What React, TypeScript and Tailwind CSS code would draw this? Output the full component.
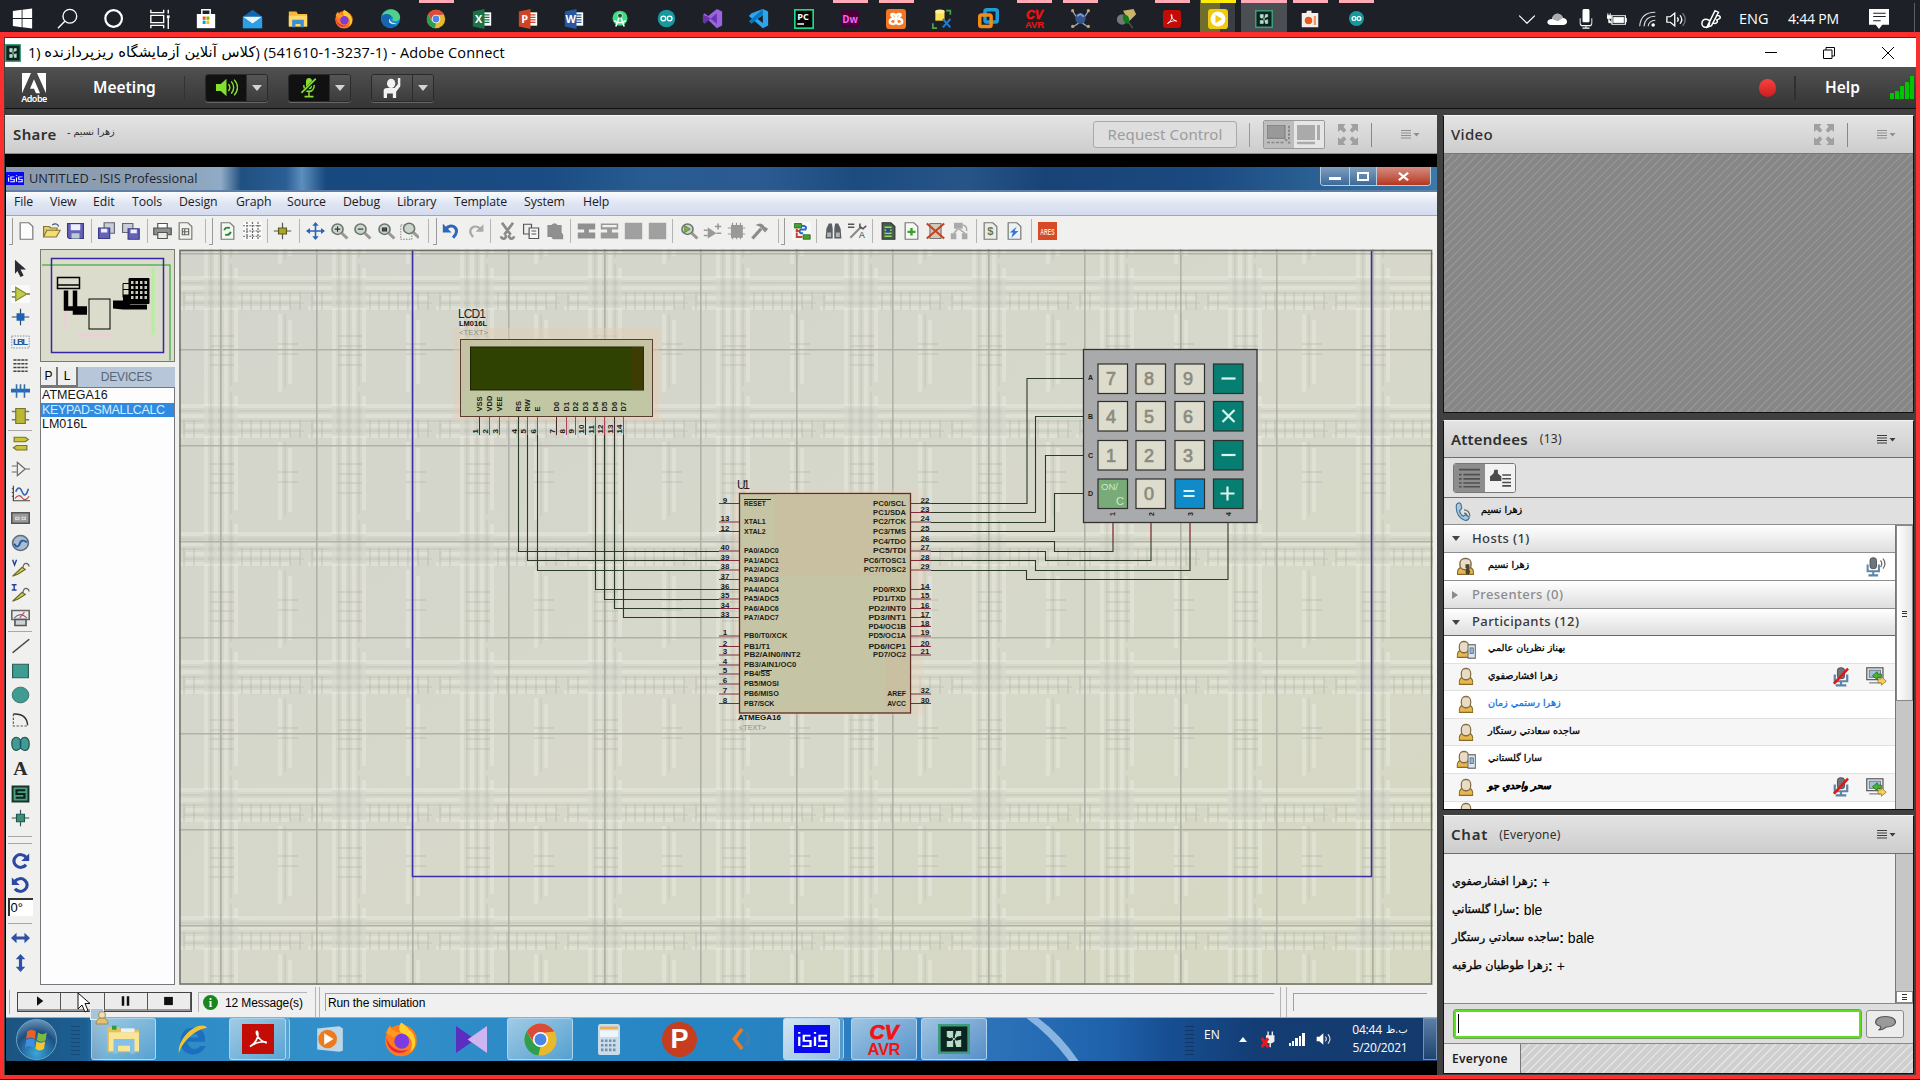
import React from "react";

type Kids = { children?: React.ReactNode };

const Svg = ({ s = 24, w, h, vb = "0 0 24 24", children }: { s?: number; w?: number; h?: number; vb?: string } & Kids) => (
  <svg width={w ?? s} height={h ?? s} viewBox={vb} preserveAspectRatio="none" className="block shrink-0" fill="none">
    {children}
  </svg>
);

/* ---------- shared logos ---------- */

const Firefox = ({ s }: { s: number }) => (
  <Svg s={s}>
    <circle cx="12" cy="13" r="10.5" fill="#ff7b1c" />
    <path d="M12 1c4 2 5 5 7 6 4 6 3 11-1 14 4-9-2-12-6-13-2-3-1-5 0-7z" fill="#ffcf2e" />
    <path d="M2 8c1-3 2-4 3-5 0 2 1 3 3 4l4 1-5 3z" fill="#ff9a1f" />
    <circle cx="12.5" cy="13.5" r="5" fill="#7a3be0" />
    <path d="M2 11c3 8 9 10 15 8-6 5-14 2-15-8z" fill="#e5284f" />
  </Svg>
);

const Chrome = ({ s }: { s: number }) => (
  <Svg s={s}>
    <circle cx="12" cy="12" r="11" fill="#e9b92c" />
    <path d="M2.5 6.5a11 11 0 0 1 19 0L12 7.5 7.5 14z" fill="#dc4a38" />
    <path d="M2.5 6.5 7.2 14.5 12 17l-1.5 6A11 11 0 0 1 2.5 6.5z" fill="#2f9e4f" />
    <circle cx="12" cy="12" r="5.2" fill="#fff" />
    <circle cx="12" cy="12" r="4.1" fill="#4a85e8" />
  </Svg>
);

const Acrobat = ({ w, h, r = 3 }: { w: number; h: number; r?: number }) => (
  <Svg w={w} h={h}>
    <rect width="24" height="24" rx={r} fill="#c40c06" />
    <path d="M6 18c4-2 7-8 5.500-12-1.500-1-1 6 6.500 9 1-1.500-7-1-12 3z" stroke="#fff" strokeWidth="1.300" />
  </Svg>
);

const Connect = ({ w, h }: { w: number; h: number }) => (
  <Svg w={w} h={h}>
    <rect x="1" y="1" width="22" height="22" fill="#0c241f" stroke="#3d9c7c" strokeWidth="2" />
    <path d="M7 6h4v4l-2 1-2-1zM17 6h-3l-1 4 4-1zM7 14h4v4H7zM13 14l4-1v5h-3zM10 10l4 4M14 10l-4 4" fill="#b9dccb" stroke="#b9dccb" strokeWidth=".8" />
  </Svg>
);

const CvAvr = ({ s }: { s: number }) => (
  <Svg s={s}>
    <text x="12" y="12" textAnchor="middle" fontSize="14" fontWeight="bold" fontStyle="italic" fontFamily="Liberation Sans" fill="#f01414" stroke="#f01414" strokeWidth=".5">CV</text>
    <text x="12" y="22.500" textAnchor="middle" fontSize="11" fontWeight="bold" fontFamily="Liberation Sans" textLength="22" fill="#f01414">AVR</text>
  </Svg>
);

const Isis = ({ w, h }: { w: number; h: number }) => (
  <Svg w={w} h={h}>
    <rect width="24" height="24" fill="#0808ee" />
    <path d="M3.5 10v8M3.5 6v1.5M11 9H6.500v4.500H11V18H5.500M14 10v8M14 6v1.500M22 9h-5v4.500h4.500V18H16" stroke="#fff" strokeWidth="1.5" />
  </Svg>
);

const Arduino = () => (
  <Svg s={19}>
    <circle cx="12" cy="12" r="11" fill="#169a9f" />
    <circle cx="8" cy="12" r="3" stroke="#fff" strokeWidth="1.600" />
    <circle cx="16" cy="12" r="3" stroke="#fff" strokeWidth="1.600" />
  </Svg>
);

const Office = ({ c, l }: { c: string; l: string }) => (
  <Svg s={20}>
    <rect x="11" y="4" width="12" height="16" fill="#fff" />
    <path d="M14 7h7M14 10h7M14 13h7M14 16h7" stroke={c} strokeWidth="1.500" />
    <path d="M1 3 15 0v24L1 21z" fill={c} />
    <text x="8" y="17" textAnchor="middle" fontSize="13" fontWeight="bold" fontFamily="Open Sans" fill="#fff">{l}</text>
  </Svg>
);

/* ---------- host taskbar ---------- */

type Task = { icon: React.ReactNode; bar?: "pink" | "yellow" | "wide" };

const tasks: Task[] = [
  { icon: <Svg s={21}><path d="M1 3.500 11 2v9.500H1zM12 2l11-1.500v11H12zM1 12.500h10V22L1 20.500zM12 12.500h11v11L12 22z" fill="#fff" /></Svg> },
  { icon: <Svg s={22}><circle cx="14" cy="9" r="7.500" stroke="#fff" strokeWidth="1.500" /><path d="M8.500 14.500 1 22" stroke="#fff" strokeWidth="1.500" /></Svg> },
  { icon: <Svg s={21}><circle cx="11" cy="12" r="9.500" stroke="#fff" strokeWidth="2.500" /></Svg> },
  { icon: <Svg s={22}><path d="M2 2v3h14V2M2 8h14v8H2zM2 22v-3h14v3M21 2v4M21 10v13" stroke="#fff" strokeWidth="1.500" /><rect x="19.500" y="8" width="3" height="3" fill="#fff" /></Svg> },
  { icon: <Svg s={20}><path d="M7 6V1h10v5" stroke="#fff" strokeWidth="1.800" /><path d="M1 6h22v17H1z" fill="#fff" /><path d="M8 9h3.500v4H8z" fill="#f25022" /><path d="M12.500 9H16v4h-3.500z" fill="#7fba00" /><path d="M8 14h3.500v4H8z" fill="#00a4ef" /><path d="M12.500 14H16v4h-3.500z" fill="#ffb900" /></Svg> },
  { icon: <Svg s={21}><path d="M1 10 12 2l11 8v13H1z" fill="#1067b5" /><path d="M1 10h22L12 18z" fill="#e9f5fc" /><path d="m1 10 11 8 11-8v13H1z" fill="#2ba0e8" /></Svg> },
  { icon: <Svg s={20}><path d="M1 3h9l2 3h11v15H1z" fill="#f5b93a" /><path d="M1 8h22v13H1z" fill="#ffd869" /><path d="M5 13h14v9h-4v-4H9v4H5z" fill="#3c8fd6" /></Svg> },
  { icon: <Firefox s={20} /> },
  { icon: <Svg s={21}><circle cx="12" cy="12" r="11" fill="#1b88d2" /><path d="M2 9C6-1 21-1 23 10c0 6-7 6-9 4 3-4-3-9-12-5z" fill="#4fd08b" /><path d="M2 9c5-4 11-2 11 2-4 2-3 9 5 9-8 6-19 0-16-11z" fill="#1565b4" /><path d="M11 12c0 5 5 6 9 5-6 3-12 0-9-5z" fill="#e9f6ff" /></Svg> },
  { icon: <Chrome s={20} />, bar: "pink" },
  { icon: <Office c="#1c7245" l="X" /> },
  { icon: <Office c="#cf4424" l="P" /> },
  { icon: <Office c="#29579f" l="W" /> },
  { icon: <Svg s={20}><circle cx="12" cy="11" r="9" fill="#3ddc84" /><path d="M5 14q7 5 14 0M12 7 7 21M12 7l5 14" stroke="#f4fff8" strokeWidth="2" /><circle cx="12" cy="8" r="3" fill="#175b3a" stroke="#e4fff0" /></Svg> },
  { icon: <Arduino /> },
  { icon: <Svg s={21}><path d="M17 1 23 4v16l-6 3L1 8l2-2 4 3zM17 1v22" fill="#9a63e0" /><path d="M1 8v8l2 2L17 6v12L7 10z" fill="#6a35ac" /></Svg> },
  { icon: <Svg s={21}><path d="m17 1 6 3v16l-6 3L1 9l3-3z" fill="#2da5ee" /><path d="M17 1 1 15l3 3L17 7z" fill="#0a77c6" /><path d="M17 8v9l-6-4.500z" fill="#1d2127" /></Svg> },
  { icon: <Svg s={20}><rect x="1" y="1" width="22" height="22" fill="#050505" stroke="#21d789" strokeWidth="2" /><text x="4" y="13" fontSize="11" fontWeight="bold" fontFamily="Open Sans" fill="#fff">PC</text><path d="M4 18h8" stroke="#fff" strokeWidth="1.800" /></Svg> },
  { icon: <Svg s={18}><rect width="24" height="24" rx="4" fill="#470137" /><text x="12" y="17" textAnchor="middle" fontSize="13" fontWeight="bold" fontFamily="Open Sans" fill="#ff61f6">Dw</text></Svg>, bar: "pink" },
  { icon: <Svg s={20}><rect width="24" height="24" rx="4" fill="#f37623" /><path d="M8 6c5 0 3 3 4 6-1 3 1 6-4 6s-4-6 0-6-5-6 0-6zM16 6c-5 0-3 3-4 6 1 3-1 6 4 6s4-6 0-6 5-6 0-6z" stroke="#fff" strokeWidth="3" /></Svg>, bar: "pink" },
  { icon: <Svg s={20}><path d="M4 2h11v12H4z" fill="#ffe24f" /><ellipse cx="9.500" cy="3" rx="5.500" ry="2.500" fill="#fff0a0" /><path d="M17 2h5v5M1 17v6h5" stroke="#4aa64a" strokeWidth="2" /><path d="m13 12 9 10M22 12l-9 10" stroke="#1e7bd0" strokeWidth="2.500" /></Svg> },
  { icon: <Svg s={21}><rect x="8" y="2" width="14" height="14" rx="2" stroke="#1f9cd8" strokeWidth="4" /><rect x="2" y="8" width="13" height="13" rx="2" stroke="#f08c17" strokeWidth="4" /></Svg> },
  { icon: <CvAvr s={21} />, bar: "pink" },
  { icon: <Svg s={21}><path d="M3 2c1 6 11 16 18 20M21 2C20 8 10 18 3 22" stroke="#8fa6c9" strokeWidth="1.600" /><circle cx="12" cy="12" r="6" fill="#39548c" /><path d="m8 9 4-2 4 3" stroke="#7d9bd0" strokeWidth="2" /><circle cx="3" cy="3" r="1.800" fill="#d0a25a" /><circle cx="21" cy="3" r="1.800" fill="#d0a25a" /><circle cx="3" cy="21" r="1.800" fill="#d0a25a" /><circle cx="21" cy="21" r="1.800" fill="#d0a25a" /></Svg>, bar: "pink" },
  { icon: <Svg s={21}><path d="M8 3 20 1l3 6-8 8z" fill="#cbb46a" /><circle cx="7" cy="13" r="6" fill="#777" /><path d="M8 7c6 0 8 4 7 11-5 0-8-3-7-11z" fill="#117a1b" /><path d="m15 17 4 6" stroke="#555" strokeWidth="1.500" /></Svg> },
  { icon: <Acrobat w={18} h={18} r={4} />, bar: "pink" },
  { icon: <Svg s={20}><rect width="24" height="24" rx="4" fill="#efcb0b" /><circle cx="12" cy="12" r="9" fill="#fff" /><path d="m9 7 8 5-8 5z" fill="#efcb0b" /></Svg>, bar: "yellow" },
  { icon: <Connect w={18} h={18} />, bar: "wide" },
  { icon: <Svg s={18}><path d="M1 4h6l1-3h6v3h9v19H1z" fill="#f3efec" /><circle cx="10" cy="14" r="5" fill="#e8591c" /><path d="M17 8h3v12h-3z" fill="#f09a62" /></Svg>, bar: "pink" },
  { icon: <Svg s={15}><circle cx="12" cy="12" r="12" fill="#169a9f" /><circle cx="8" cy="12" r="3" stroke="#fff" strokeWidth="2" /><circle cx="16" cy="12" r="3" stroke="#fff" strokeWidth="2" /></Svg>, bar: "pink" },
];

const HostTaskbar = () => (
  <div className="flex h-8 items-stretch overflow-hidden bg-[#1d2127]">
    <div className="-ml-px flex">
      {tasks.map((t, i) => (
        <div
          key={i}
          className={
            "flex w-[46px] flex-col items-center " +
            (t.bar === "wide" ? "bg-[#4b4e52]" : t.bar === "yellow" ? "bg-[linear-gradient(90deg,transparent_5px,#716d2e_5px,#716d2e_25px,#3b3f43_25px,#3b3f43_40px,transparent_40px)]" : "")
          }
        >
          <div
            className={
              "h-[3px] shrink-0 " +
              (t.bar === "pink" ? "w-[35px] bg-[#ffaab4]" : t.bar === "yellow" ? "w-[35px] bg-[#ffee00]" : t.bar === "wide" ? "w-[46px] bg-[#ffaab4]" : "w-0")
            }
          />
          <div className="flex h-[33px] shrink-0 items-center pb-[2px]">{t.icon}</div>
        </div>
      ))}
    </div>
    <div className="ml-auto flex items-center pt-[6px] font-['Open_Sans'] text-[15px] text-white">
      <Svg w={16} h={9}><path d="m0 1 12 21L24 1" stroke="#fff" strokeWidth="2.200" /></Svg>
      <div className="w-3" />
      <Svg w={20} h={13}><path d="M4 22c-6-2-4-11 2-11C8-3 18 0 19 9c6 0 7 12 1 13z" fill="#fff" /><path d="M6 11C8-3 18 0 19 9l-6 6z" fill="#a9abad" /></Svg>
      <div className="w-3" />
      <Svg w={14} h={20}><rect x="6" y="0" width="12" height="16" rx="2" fill="#fff" /><path d="M2 11v6q0 3 4 3h12q4 0 4-3v-6M12 20v3M6 23h12" stroke="#fff" strokeWidth="1.500" /></Svg>
      <div className="w-3.5" />
      <Svg w={20} h={13}><path d="M6 5h16v16H6zM23 9v8" stroke="#fff" strokeWidth="1.500" /><path d="M8 8h12v10H8zM0 4h5v6H0zM2 10v8h4M1 0v4M4 0v4" fill="#fff" stroke="#fff" /></Svg>
      <div className="w-3" />
      <Svg w={17} h={16}><path d="M1 23C2 9 10 2 23 2M7 23C8 13 13 8 23 8M13 23c0-5 4-9 10-9" stroke="#ddd" strokeWidth="1.500" /><circle cx="20" cy="21" r="2.500" fill="#fff" /></Svg>
      <div className="w-2.5" />
      <Svg w={21} h={17}><path d="M1 8h4l5-5v18l-5-5H1z" stroke="#fff" strokeWidth="1.500" /><path d="M13 9q2 3 0 6M16 6q4 6 0 12" stroke="#fff" strokeWidth="1.500" /><path d="M19 3q6 9 0 18" stroke="#777" strokeWidth="1.500" /></Svg>
      <div className="w-3.5" />
      <Svg w={21} h={20}><path d="M8 19 16 2l4 2-8 16-5 2zM10 14c-7-4-9 0-9 4 1 6 8 5 9-2M17 8c6-1 7 3 1 5 2 3-1 5-4 4" stroke="#fff" strokeWidth="1.700" /></Svg>
      <span className="ml-[17px] w-[31px] text-[14.500px] leading-5">ENG</span>
      <span className="ml-[18px] w-[55px] whitespace-nowrap text-[14px] leading-5 tracking-[-0.200px]">4:44 PM</span>
      <div className="w-[26px]" />
      <Svg w={20} h={20}><path d="M0 0h24v19h-8l-4 5-4-5H0z" fill="#fff" /><path d="M5 5h15M5 9h15M5 14h9" stroke="#1d2127" strokeWidth="1.300" /></Svg>
      <div className="mr-[5px] ml-[25px] h-8 w-px bg-[#5a5d61]" />
    </div>
  </div>
);

/* ---------- window chrome ---------- */

const TitleBar = () => (
  <div className="flex h-[29px] shrink-0 items-center bg-white text-black">
    <Connect w={16} h={18} />
    <div className="ml-[7px] flex items-center whitespace-pre font-['Open_Sans'] text-[14.500px]" dir="ltr">
      <span>1) </span>
      <span dir="rtl" className="font-['DejaVu_Sans'] text-[14.800px]">کلاس آنلاین آزمایشگاه ریزپردازنده</span>
      <span className="tracking-[0.100px]">) (541610-1-3237-1) - Adobe Connect</span>
    </div>
    <div className="ml-auto flex items-center pr-[22px]">
      <div className="h-px w-3 bg-black" />
      <div className="w-[46px]" />
      <Svg s={12}><path d="M1 6h17v17H1zM6 6V1h17v17h-5" stroke="#000" strokeWidth="2" /></Svg>
      <div className="w-[47px]" />
      <Svg s={12}><path d="m0 0 24 24M24 0 0 24" stroke="#000" strokeWidth="2" /></Svg>
    </div>
  </div>
);

const Split = ({ dark, children }: { dark?: boolean } & Kids) => (
  <div className="flex h-[28px] w-[63px] overflow-hidden rounded-[3px] border border-[#2a2a2a] shadow-[0_1px_0_#666]">
    <div className={"flex w-[41px] items-center justify-center border-r border-[#2c2c2c] " + (dark ? "bg-[#111]" : "bg-gradient-to-b from-[#565656] to-[#3c3c3c]")}>{children}</div>
    <div className="flex flex-1 items-center justify-center bg-gradient-to-b from-[#565656] to-[#3c3c3c]">
      <div className="border-x-[5px] border-t-[6px] border-x-transparent border-t-[#d4d4d4]" />
    </div>
  </div>
);

const ConnectBar = () => (
  <div className="flex h-[42px] shrink-0 items-center border-b border-[#111] bg-gradient-to-b from-[#515151] to-[#353535] font-['Noto_Sans'] text-white">
    <div className="ml-[17px] flex w-6 flex-col items-center pt-px">
      <Svg w={24} h={21}><path d="M0 0h9L0 23zM15 0h9v23zM12 7l6 16h-4l-2-5H8z" fill="#fff" /></Svg>
      <span className="-mt-px text-[9px] leading-[11px] font-semibold tracking-[-0.500px]">Adobe</span>
    </div>
    <span className="ml-[47px] w-[63px] pt-px text-[15.500px] font-semibold">Meeting</span>
    <div className="mr-[20px] ml-[28px] h-6 w-px bg-[#333]" />
    <Split dark>
      <Svg w={23} h={21}><path d="M1 8h5l6-6v20l-6-6H1z" fill="#84e02f" /><path d="M14 8q3 4 0 8M17 5q5 7 0 14M20 3q7 9 0 18" stroke="#84e02f" strokeWidth="1.500" /></Svg>
    </Split>
    <div className="w-5" />
    <Split dark>
      <Svg w={18} h={21}><rect x="8" y="1" width="8" height="13" rx="4" fill="#84e02f" /><path d="M5 9c0 10 14 10 14 0M12 17v5M6 22.500h12" stroke="#84e02f" strokeWidth="2" /><path d="M3 18 22 2" stroke="#111" strokeWidth="4" /><path d="M2 18 21 2" stroke="#84e02f" strokeWidth="2" /></Svg>
    </Split>
    <div className="w-[20px]" />
    <Split>
      <Svg w={20} h={22}><circle cx="11" cy="7" r="5" fill="#f2f2f2" /><path d="M2 23V15q0-3 4-3h9l4-4V1h3v9l-5 6v7h-4v-5H6v5z" fill="#f2f2f2" /></Svg>
    </Split>
    <div className="ml-auto flex items-center">
      <div className="h-[18px] w-[17px] rounded-full bg-gradient-to-b from-[#fb4040] to-[#c81e1e]" />
      <div className="ml-[18px] h-6 w-[2px] bg-[#303030]" />
      <span className="ml-[29px] w-[37px] pt-px text-[15.500px] font-semibold">Help</span>
      <div className="ml-[28px] flex h-[23px] items-end gap-px pr-[2px]">
        <div className="h-[6px] w-1 bg-[#00c400]" />
        <div className="h-2 w-1 bg-[#00c400]" />
        <div className="h-[13px] w-1 bg-[#00c400]" />
        <div className="h-[17px] w-1 bg-[#00c400]" />
        <div className="h-[23px] w-1 bg-[#00c400]" />
      </div>
    </div>
  </div>
);

const Expand = () => (
  <Svg w={20} h={21}><path d="M0 0h9L6.500 3 10 7 7 10 3 6.500 0 9zM24 0h-9l2.500 3L14 7l3 3 4-3.500L24 9zM0 24h9l-2.500-3 3.500-4-3-3-4 3.500L0 15zM24 24h-9l2.500-3-3.500-4 3-3 4 3.500 3-2.500z" fill="#a0a0a0" /></Svg>
);

const PodMenu = ({ faint }: { faint?: boolean }) => (
  <Svg w={19} h={9} vb="0 0 19 9"><path d="M0 .5h10M0 3h10M0 5.500h10M0 8h10" stroke={faint ? "#8e8e8e" : "#3c3c3c"} /><path d="M12.500 3h6l-3 3.500z" fill={faint ? "#8e8e8e" : "#3c3c3c"} /></Svg>
);

const podHead = "flex shrink-0 items-center bg-gradient-to-b from-[#e3e3e3] to-[#cdcdcd] font-['Noto_Sans'] text-[#2f2f2f]";

/* ---------- schematic editor ---------- */

const V = ({ d, c = "#777", f = "none", w = 1.500 }: { d: string; c?: string; f?: string; w?: number }) => <path d={d} stroke={c} fill={f} strokeWidth={w} />;
const page = "M4 1h11l5 5v17H4z";
const lens = (
  <g><V d="m15 15 7 7" c="#9a9a90" w={4} /><circle cx="9.500" cy="9.500" r="7" fill="#c9d6c9" stroke="#6b7471" strokeWidth="2" /></g>
);

const toolbar: { c: number; g: React.ReactNode | "sep" | "bracket" }[] = [
  { c: 11, g: "bracket" },
  { c: 26, g: <V d={page} f="#fdfdfd" c="#777" /> },
  { c: 51, g: <g><V d="M2 20V6h7l2 2h8v4" f="#e0cf7a" c="#877730" /><V d="m2 20 4-9h17l-5 9z" f="#f2df74" c="#877730" /><V d="M13 4c4-3 7-1 8 2" c="#456" /></g> },
  { c: 75, g: <g><V d="M2 2h20v20H4l-2-2z" f="#6463b8" c="#3b3a86" /><path d="M6 3h12v8H6z" fill="#eef" /><path d="M7 15h10v7H7z" fill="#bcc" /></g> },
  { c: 91, g: "sep" },
  { c: 106.5, g: <g><V d="M9 1h13v14H9z" f="#c9cdd6" c="#667" /><V d="M2 8h14v14H2z" f="#6463b8" c="#3b3a86" /><path d="M5 9h8v5H5z" fill="#eef" /></g> },
  { c: 130, g: <g><V d="M2 2h13v12H2z" f="#c9cdd6" c="#667" /><V d="M9 9h14v14H9z" f="#6463b8" c="#3b3a86" /><path d="M12 10h8v5h-8z" fill="#eef" /></g> },
  { c: 147, g: "sep" },
  { c: 162.5, g: <g><V d="M6 8V2h12v6" f="#fff" c="#555" /><V d="M1 8h22v9H1z" f="#8b9290" c="#4b504f" /><V d="M6 14h12v8H6z" f="#e8efe2" c="#555" /></g> },
  { c: 185, g: <g><V d={page} f="#f2f2ec" c="#777" /><V d="M8 9h8v8H8zM11 9v8M8 13h8" c="#666" /></g> },
  { c: 205, g: "sep" },
  { c: 211, g: "bracket" },
  { c: 227, g: <g><V d={page} f="#f4f8f0" c="#777" /><V d="M8 11q1-5 7-3M16 13q-1 5-7 4" c="#2b8a3c" w={2.500} /></g> },
  { c: 252, g: <g><path d="M0 0h24v24H0z" fill="#fafafa" /><path d="M5 0v24M12 0v24M19 0v24M0 5h24M0 12h24M0 19h24" stroke="#666" strokeWidth="1.500" strokeDasharray="2.500 1.500" /></g> },
  { c: 267, g: "sep" },
  { c: 282.5, g: <g><V d="M12 1v22M1 12h22" c="#555" /><V d="M7 8h10v8H7z" f="#a9a62c" c="#5c5a18" /></g> },
  { c: 299, g: "sep" },
  { c: 315, g: <path d="m12 0 4 5h-3v6h6V8l5 4-5 4v-3h-6v6h3l-4 5-4-5h3v-6H5v3l-5-4 5-4v3h6V5H8z" fill="#2b62b5" /> },
  { c: 339, g: <g>{lens}<V d="M6 9.500h7M9.500 6v7" c="#333" /></g> },
  { c: 362, g: <g>{lens}<V d="M6 9.500h7" c="#333" /></g> },
  { c: 386, g: <g>{lens}<V d="M7 8h5v4H7z" c="#333" f="#555" /></g> },
  { c: 409, g: <g><path d="M1 4h14v19H1z" stroke="#666" strokeDasharray="2 1.500" /><g transform="translate(2 -1)">{lens}</g></g> },
  { c: 428, g: "sep" },
  { c: 435, g: "bracket" },
  { c: 451, g: <g><V d="M5 9C12 0 25 9 14 21" c="#2f68b8" w={4} /><path d="M1 2v12h11z" fill="#2f68b8" /></g> },
  { c: 475, g: <g><V d="M18 9C11 2 0 9 9 20" c="#aaa" w={3} /><path d="M22 3v10H12z" fill="#aaa" /></g> },
  { c: 490, g: "sep" },
  { c: 507, g: <V d="m5 1 11 16M19 1 8 17M4 19a3 3 0 1 0 5-2M20 19a3 3 0 1 1-5-2" c="#8b8b8b" w={3.500} /> },
  { c: 531, g: <g><V d="M2 3h10v13H2z" f="#eee" c="#555" /><V d="M9 8h12v14H9zM12 12h6M12 16h6" f="#f5f5f5" c="#555" /></g> },
  { c: 554, g: <g><path d="M3 4h5q4-5 8 0h5v10l2 3v6H10l-2-3H3z" fill="#8f8f8f" /></g> },
  { c: 570, g: "sep" },
  { c: 586, g: <path d="M1 2h22v8h-8v4h8v8H1v-8h8v-4H1z" fill="#909090" /> },
  { c: 609.5, g: <g><path d="M1 2h22v8h-8v4h8v8H1v-8h8v-4H1z" fill="#999" /><path d="M3 4h18v3H3z" fill="#f0f0f0" /></g> },
  { c: 633, g: <path d="M1 1h22v22H1z" fill="#a0a0a0" /> },
  { c: 657, g: <path d="M1 1h22v22H1z" fill="#a0a0a0" /> },
  { c: 672, g: "sep" },
  { c: 689, g: <g>{lens}<path d="M6 5v9l7-4.500z" fill="#84ac4f" stroke="#567a2c" /></g> },
  { c: 712, g: <g><path d="M6 7v15l11-7z" fill="#999" /><V d="M1 11h5M1 18h5M17 15h6M15 6h8M19 2v8" c="#999" w={2} /></g> },
  { c: 736, g: <g><path d="M5 4h15v17H5z" fill="#999" /><V d="M7 1v22M12 1v22M17 1v22M1 8h22M1 16h22" c="#999" /></g> },
  { c: 759, g: <g><V d="m3 22 11-13" c="#8c8c8c" w={4} /><path d="M7 4q8-5 11 2l5 3-4 5-7-8z" fill="#8c8c8c" /></g> },
  { c: 778, g: "sep" },
  { c: 783, g: "bracket" },
  { c: 801, g: <g><path d="M0 0h24v24H0z" fill="#f8f8f8" /><path d="M3 2h9v6H3zM14 17h9v6h-9z" fill="#48a02e" stroke="#23601a" /><V d="M12 5q8 0 5 5h-6q-3 2 0 5h3" c="#2b69c4" w={2.500} /><V d="M6 9v3h3M6 14v6h7" c="#d0402c" w={2.500} /></g> },
  { c: 816, g: "sep" },
  { c: 833, g: <g><path d="M3 9 6 2h4l1 7v13H2zM21 9l-3-7h-4l-1 7v13h9z" fill="#5a5f62" /><path d="M4 14h5v6H4zM15 14h5v6h-5z" fill="#aeb4b6" /></g> },
  { c: 857, g: <g><V d="m3 21 14-15" c="#888" w={2.500} /><V d="M0 3h8M0 7h8M15 2v5l4 2 4-4" c="#555" w={2} /><text x="14" y="21.500" fontSize="11" fontFamily="Liberation Sans" fill="#333">A</text></g> },
  { c: 872, g: "sep" },
  { c: 888, g: <g><V d={page} f="#42614b" c="#333" /><V d="M7 7h9M7 11h9M7 15h9M7 19h9" c="#9ed36a" w={1.800} /><path d="M9 9h5v5H9z" fill="#1f4fa0" /></g> },
  { c: 911, g: <g><V d={page} f="#f6f9f2" c="#777" /><V d="M12 8v10M7 13h10" c="#36a02e" w={3} /></g> },
  { c: 935, g: <g><V d="M5 2h14v20H5z" f="#cfc9b8" c="#777" /><V d="m1 2 22 20M23 2 1 22" c="#c8401f" w={2.500} /></g> },
  { c: 959, g: <g><path d="M5 1h11v8H5zM1 15h7v8H1zM15 15h7v8h-7z" fill="#aaa" /><V d="M10 9 5 15M11 9l8 6M16 4q6 1 5 8" c="#aaa" w={2} /></g> },
  { c: 976, g: "sep" },
  { c: 990, g: <g><V d={page} f="#ecece2" c="#777" /><text x="8" y="18" fontSize="14" fontWeight="bold" fontFamily="Liberation Sans" fill="#6b7a52">$</text></g> },
  { c: 1014, g: <g><V d={page} f="#eef1f4" c="#777" /><path d="m15 6-9 8h4l-2 7 9-9h-5z" fill="#2f7ad0" /></g> },
  { c: 1031, g: "sep" },
  { c: 1047, g: <g><path d="M0 0h24v24H0z" fill="#d64a26" /><text x="3" y="17.500" fontSize="12" textLength="18" lengthAdjust="spacingAndGlyphs" fontWeight="bold" fontFamily="Liberation Sans" fill="#fbe3d0">ARES</text></g> },
];

const ToolRow = () => {
  let end = 6;
  return (
    <div className="flex h-[34px] shrink-0 items-center overflow-hidden border-t border-[#a5a7ad] bg-[#f0f0ef] pb-[3px]">
      {toolbar.map(({ c, g }, i) => {
        const w = g === "sep" ? 1 : g === "bracket" ? 4 : 19;
        const gap = c - w / 2 - end;
        end = c + w / 2;
        return (
          <div key={i} className="shrink-0" style={{ marginLeft: gap, width: w }}>
            {g === "sep" ? <div className="h-6 bg-[#b4b4b4]" /> : g === "bracket" ? <div className="h-[27px] border-r border-b border-[#9a9a9a]" /> : <Svg w={19} h={18}>{g}</Svg>}
          </div>
        );
      })}
    </div>
  );
};

const menus: [string, number][] = [
  ["File", 36], ["View", 43], ["Edit", 39], ["Tools", 47], ["Design", 57], ["Graph", 51],
  ["Source", 56], ["Debug", 54], ["Library", 57], ["Template", 70], ["System", 59], ["Help", 40],
];

const teal = "#3f9c93";
const sideTools: { c: number; g: React.ReactNode | "sep" }[] = [
  { c: 268, g: <path d="m5 1 14 13h-7l4 8-4 2-4-8-3 4z" fill="#2b2b33" /> },
  { c: 294, g: <g><path d="M-4-4h34v34H-4z" fill="#fafafa" /><V d="M1 9h5M1 16h5M20 12h4" c="#6d7a33" w={2} /><V d="M6 3v18l14-9z" f="#c3cc45" c="#7f8a2d" /></g> },
  { c: 317, g: <g><V d="M12 1v22M1 12h22" c="#345" /><path d="M7 7h10v10H7z" fill="#1c63b8" /></g> },
  { c: 341.5, g: <g><path d="M1 4h22v16H1z" stroke="#678" strokeDasharray="2 1.500" /><text x="12" y="16.500" textAnchor="middle" fontSize="12" fontWeight="bold" fontFamily="Liberation Sans" textLength="19" fill="#26589c">LBL</text></g> },
  { c: 366, g: <path d="M3 4h18M3 9h18M3 14h18M3 19h18" stroke="#444" strokeWidth="2" strokeDasharray="4 1" /> },
  { c: 391, g: <g><path d="M0 9h24v5H0z" fill="#1d6cc0" /><V d="M7 3v18M17 3v18M12 3v8" c="#3a6ea6" w={2} /></g> },
  { c: 416, g: <g><V d="M1 6h22M1 17h22" c="#777" w={2} /><V d="M6 2h12v20H6z" f="#b9b733" c="#77752a" /></g> },
  { c: 430, g: "sep" },
  { c: 444, g: <g><V d="M4 3h14l4 3-4 3H4z" f="#c9c53a" c="#77752a" /><V d="M20 14H7l-4 3 4 3h13z" f="#c9c53a" c="#77752a" /></g> },
  { c: 469, g: <V d="M8 3v18l10-9zM1 8h6M1 16h6M18 12h6" c="#666" /> },
  { c: 493.5, g: <g><V d="M3 1v20h21M1 5h2M1 10h2M1 15h2" c="#444" /><V d="M6 9q4-10 8 0t8-4" c="#3a62b0" w={2} /><V d="M5 18q5-7 9-1t9-2" c="#c4433a" /></g> },
  { c: 518, g: <g><V d="M1 5h22v14H1z" f="#9a9a9a" c="#555" w={2} /><V d="M10 15v-4H6v3h3M14 15v-4h4v3h-3" c="#ddd" /></g> },
  { c: 543, g: <g><circle cx="12" cy="12" r="10" fill="#a9bdd0" stroke="#5f6c78" strokeWidth="2" /><V d="M4 13c3 6 6 4 7 0s4-6 9-2" c="#2559a5" w={2.500} /></g> },
  { c: 567.5, g: <g><V d="M2 1l2.500 7L7 1" c="#26419c" w={1.800} /><V d="m2 23 12-12 4 3-9 6z" f="#d5d04e" c="#6b6a2c" /><V d="M15 12c1-9 7-7 8-2" c="#666" /></g> },
  { c: 592.5, g: <g><V d="M1 1h6M4 1v7M1 8h6" c="#26419c" w={1.800} /><V d="m2 23 12-12 4 3-9 6z" f="#d5d04e" c="#6b6a2c" /><V d="M15 12c1-9 7-7 8-2" c="#666" /></g> },
  { c: 618, g: <g><V d="M1 2h22v12H1z" f="#e8ebef" c="#666" w={2} /><V d="M4 12q8-9 16 0" c="#667" /><V d="m11 12 6-8" c="#c44" /><V d="M5 14h14v8H5z" f="#cfd2d5" c="#555" w={2} /></g> },
  { c: 631, g: "sep" },
  { c: 646, g: <V d="M2 21 23 3" c="#444" w={2} /> },
  { c: 671, g: <V d="M2 3h20v18H2z" f={teal} c="#2c5f5a" /> },
  { c: 695, g: <circle cx="12" cy="12" r="10.500" fill={teal} stroke="#2c5f5a" /> },
  { c: 720, g: <g><V d="M3 4q17-1 18 15" c="#333" w={1.800} /><path d="M3 4v16h18" stroke="#556" strokeDasharray="3 2" strokeWidth="1.500" /></g> },
  { c: 744, g: <g><V d="M12 7C8 0 1 3 1 11c0 12 8 11 11 6 3 5 11 6 11-5 0-9-7-12-11-5z" f={teal} c="#24544f" /><V d="M12 8v8" c="#1b4a80" w={2} /></g> },
  { c: 769, g: <text x="12" y="20.500" textAnchor="middle" fontSize="25" fontWeight="bold" fontFamily="Liberation Serif" fill="#2d2d2d">A</text> },
  { c: 793.5, g: <g><V d="M2 2h20v20H2z" f="#4d9c80" c="#17352a" w={2.500} /><V d="M18 7H7v5h10v5H6" c="#0d241c" w={2.800} /></g> },
  { c: 817.5, g: <g><V d="M12 1v22M1 12h22" c="#355" /><V d="M7 7h10v10H7z" f="#3f8f70" c="#255" /></g> },
  { c: 836, g: "sep" },
  { c: 843, g: "sep" },
  { c: 861, g: <g><V d="M19 17a8.500 8.500 0 1 1 0-10" c="#2b49a3" w={4} /><path d="M23 2v10H13z" fill="#2b49a3" /></g> },
  { c: 885, g: <g><V d="M5 17a8.500 8.500 0 1 0 0-10" c="#2b49a3" w={4} /><path d="M1 2v10h10z" fill="#2b49a3" /></g> },
  { c: 907, g: "angle" },
  { c: 923, g: "sep" },
  { c: 938, g: <path d="m0 12 7-7v5h10V5l7 7-7 7v-5H7v5z" fill="#2f4fa8" /> },
  { c: 963, g: <path d="m12 0 6 7h-4v10h4l-6 7-6-7h4V7H6z" fill="#2f4fa8" /> },
];

const SideTools = () => {
  let end = 249;
  return (
    <div className="flex w-[33px] shrink-0 flex-col items-center bg-[#f0f0ef] pr-[5px]">
      {sideTools.map(({ c, g }, i) => {
        const h = g === "sep" ? 1 : 18;
        const gap = c - h / 2 - end;
        end = c + h / 2;
        return (
          <div key={i} className="shrink-0" style={{ marginTop: gap, height: h }}>
            {g === "sep" ? (
              <div className="h-px w-6 bg-[#a8a8a8]" />
            ) : g === "angle" ? (
              <div className="h-[18px] w-[25px] border-t-2 border-l-2 border-[#333] bg-white pl-px font-['Liberation_Sans'] text-[13px] leading-4 text-black">0°</div>
            ) : (
              <Svg w={19} h={18}>{g}</Svg>
            )}
          </div>
        );
      })}
    </div>
  );
};

const Overview = () => (
  <svg width="135" height="113" viewBox="40 249.500 135 113" className="block shrink-0">
    <rect x="40.500" y="250" width="134" height="112" fill="#dcdccc" stroke="#7a7a72" />
    <path d="M42 265.500H170M170 265v96" stroke="#59b35c" strokeWidth="1.500" fill="none" />
    <path d="M153 268v67" stroke="#b5efa0" strokeWidth="3" />
    <path d="M78 336h36M65 285v45" stroke="#e8cfd8" strokeWidth="3" />
    <rect x="51.500" y="259" width="112" height="94" fill="none" stroke="#3526a4" strokeWidth="1.500" />
    <path d="M57.500 278h22v11h-22zM57 285.500h23" fill="none" stroke="#000" strokeWidth="1.500" />
    <path d="M66 291v18h21M75 291v22h12" fill="none" stroke="#000" strokeWidth="4.500" />
    <rect x="89" y="299.500" width="21" height="30" fill="#dcdccc" stroke="#000" />
    <path d="M113 301h10v-6h7v10h17v5h-24l-10-1z" />
    <path d="M129 279h20v25h-20zM123 284h6M123 290h6M123 284v14" stroke="#000" fill="#000" />
    <g fill="#c9c9bd">
      {[0, 1, 2, 3].map((r) => [0, 1, 2, 3].map((k) => <rect key={`${r}${k}`} x={131 + k * 4.500} y={281.500 + r * 5} width="2.500" height="3" />))}
    </g>
  </svg>
);

type Pin = [string, string, number];
const left: Pin[] = [
  ["RESET", "9", 503.5], ["XTAL1", "13", 522], ["XTAL2", "12", 531.5],
  ["PA0/ADC0", "40", 551], ["PA1/ADC1", "39", 560.5], ["PA2/ADC2", "38", 570], ["PA3/ADC3", "37", 579.5],
  ["PA4/ADC4", "36", 589.5], ["PA5/ADC5", "35", 599], ["PA6/ADC6", "34", 608.5], ["PA7/ADC7", "33", 617.5],
  ["PB0/T0/XCK", "1", 636], ["PB1/T1", "2", 646.5], ["PB2/AIN0/INT2", "3", 655], ["PB3/AIN1/OC0", "4", 665],
  ["PB4/SS", "5", 674], ["PB5/MOSI", "6", 684], ["PB6/MISO", "7", 694], ["PB7/SCK", "8", 703.5],
];
const right: Pin[] = [
  ["PC0/SCL", "22", 503.5], ["PC1/SDA", "23", 512.5], ["PC2/TCK", "24", 522], ["PC3/TMS", "25", 531.5],
  ["PC4/TDO", "26", 541.5], ["PC5/TDI", "27", 551], ["PC6/TOSC1", "28", 560.5], ["PC7/TOSC2", "29", 570],
  ["PD0/RXD", "14", 589.5], ["PD1/TXD", "15", 599], ["PD2/INT0", "16", 608.5], ["PD3/INT1", "17", 617.5],
  ["PD4/OC1B", "18", 626.5], ["PD5/OC1A", "19", 636], ["PD6/ICP1", "20", 646.5], ["PD7/OC2", "21", 655],
  ["AREF", "32", 694], ["AVCC", "30", 703.5],
];
const lcdPins: [string, number][] = [
  ["VSS", 479.5], ["VDD", 489.5], ["VEE", 499.5], ["RS", 518.5], ["RW", 527.5], ["E", 537.5], ["D0", 556.5],
  ["D1", 566.5], ["D2", 575.5], ["D3", 585.5], ["D4", 595.5], ["D5", 604.5], ["D6", 614.5], ["D7", 623.5],
];
const keys = ["7", "8", "9", "−", "4", "5", "6", "×", "1", "2", "3", "−", "ON", "0", "=", "+"];
const kx = [1098, 1136, 1175, 1213.5];
const ky = [364, 401.5, 440.500, 479];

const Schematic = () => (
  <svg width="1254" height="736" viewBox="179 249 1254 736" className="block shrink-0" fontFamily="Liberation Sans">
    <defs>
      <pattern id="major" x="316" y="349" width="96" height="96" patternUnits="userSpaceOnUse">
        <path d="M0 .8H96M.8 0V96" stroke="#a6a79e" strokeWidth="1.600" opacity=".8" />
      </pattern>
      <pattern id="weave" x="180" y="264" width="128" height="128" patternUnits="userSpaceOnUse">
        <path d="M0 14H128M0 24H128M6 34H120M0 44H110" stroke="#ecece2" strokeWidth="4" opacity=".4" />
        <path d="M0 19H128M0 29H128M4 39H124" stroke="#adaea3" opacity=".45" />
        <path d="M26 0V128M36 0V128M46 0V128M56 4V118M100 50V128M110 56V120" stroke="#ecece2" strokeWidth="4" opacity=".4" />
        <path d="M31 0V128M41 0V128M51 0V122M105 50V124" stroke="#adaea3" opacity=".45" />
        <path d="M4 28V46M14 28V46M62 28V46M71 28V46M81 28V46M90 28V46M100 28V46M110 28V46M120 28V46" stroke="#a6a79c" opacity=".5" />
        <path d="M30 72H54M30 82H54M30 91H54M30 101H54M98 80H118M98 90H118" stroke="#a6a79c" opacity=".5" />
        <path d="M24 14h34v30H24z" fill="#c3c4b9" opacity=".35" />
      </pattern>
      <linearGradient id="wash" x1="0" y1="0" x2="1" y2="1">
        <stop offset="0" stopColor="#d3d4cb" />
        <stop offset=".5" stopColor="#d7d8cb" />
        <stop offset="1" stopColor="#d6d8c2" />
      </linearGradient>
    </defs>
    <rect x="179" y="249" width="1254" height="736" fill="url(#wash)" />
    <rect x="179" y="249" width="1254" height="736" fill="url(#weave)" />
    <rect x="179" y="249" width="1254" height="736" fill="url(#major)" />
    <rect x="180" y="250.500" width="1251.500" height="733.500" fill="none" stroke="#6f6f67" strokeWidth="1.500" />
    <path d="M412.500 251V876.500H1371.500V251" fill="none" stroke="#3a2ea8" strokeWidth="1.500" />

    <path d="M453 328h206v93H453z" fill="#e2cfb4" opacity=".45" />
    <rect x="460.500" y="339.500" width="192" height="77" fill="#c6c2a4" stroke="#5a3c30" />
    <path d="M462 391h190v25H462z" fill="#bcc9a2" opacity=".6" />
    <rect x="470.500" y="347" width="173" height="43" fill="#2f4201" stroke="#1b2404" />
    <path d="M632 347h11.500v43H632z" fill="#3d3c05" />
    <text x="458" y="318" fontSize="12" fill="#222" textLength="28">LCD1</text>
    <text x="459" y="326" fontSize="7" fontWeight="bold" fill="#111" textLength="28" lengthAdjust="spacingAndGlyphs">LM016L</text>
    <text x="459" y="335" fontSize="7" fill="#8d8d85" textLength="29" lengthAdjust="spacingAndGlyphs">&lt;TEXT&gt;</text>
    {lcdPins.map(([n, x], i) => (
      <g key={n} fontSize="7.500" fontWeight="bold" fill="#1c1c18">
        <path d={`M${x} 417V435`} stroke={i % 3 === 0 ? "#4a2a2a" : "#b04058"} />
        <text transform={`translate(${x + 2.5} 411.500) rotate(-90)`}>{n}</text>
        <text transform={`translate(${x - 1.500} 433.500) rotate(-90)`} fontSize="8">{i + 1}</text>
      </g>
    ))}
    <g fill="none" stroke="#2c3a26" strokeWidth="1.100">
      <path d="M518.500 417V551.500H719M527.500 435V560.500H719M537.500 435V570.500H719M595.500 435V589.500H719M604.500 435V599.500H719M614.500 435V608.500H719M623.500 435V617.500H719" />
      <path d="M931 503.500H1027V378.500H1083M931 512.500H1035.500V416.500H1083M931 522.500H1045.500V455.500H1083M931 531.500H1054.500V493.500H1083" />
      <path d="M931 541.500H1054.500V551.500H1113V523M931 551.500H1045.500V560.500H1151V523M931 560.500H1035.500V570.500H1190V523M931 570.500H1026.500V579.500H1228V523" />
    </g>

    <rect x="734" y="489" width="190" height="226" fill="#e8cdb8" opacity=".35" />
    <rect x="739.500" y="493.500" width="171" height="219.500" fill="#c5c5a5" stroke="#5f2c26" strokeWidth="1.300" />
    <path d="M775 494h115v82H775zM885 600h25v112h-25z" fill="#c9bda0" opacity=".7" />
    <text x="737" y="489" fontSize="12" fill="#222" textLength="13">U1</text>
    {left.map(([n, p, y]) => (
      <g key={n} fontSize="7.500" fontWeight="bold" fill="#1c1c18">
        <path d={`M719 ${y}H739`} stroke="#7d2e38" />
        <text x="744" y={y + 2} textLength={n.length * 4.350} lengthAdjust="spacingAndGlyphs">{n}</text>
        <text x="725" y={y - 1} textAnchor="middle" fontSize="8">{p}</text>
      </g>
    ))}
    <path d="M744 499.500h27M761 670.500h11" stroke="#222" />
    {right.map(([n, p, y]) => (
      <g key={n} fontSize="7.500" fontWeight="bold" fill="#1c1c18">
        <path d={`M911 ${y}H931`} stroke="#7d2e38" />
        <text x="906" y={y + 2} textAnchor="end" textLength={n.length * 4.700} lengthAdjust="spacingAndGlyphs">{n}</text>
        <text x="925" y={y - 1} textAnchor="middle" fontSize="8">{p}</text>
      </g>
    ))}
    <text x="738" y="720" fontSize="7.500" fontWeight="bold" fill="#111" textLength="43" lengthAdjust="spacingAndGlyphs">ATMEGA16</text>
    <text x="739" y="729.500" fontSize="7" fill="#8d8d85" textLength="27" lengthAdjust="spacingAndGlyphs">&lt;TEXT&gt;</text>

    <rect x="1083.500" y="349.500" width="173.500" height="173" fill="#a8aaab" stroke="#333" strokeWidth="1.300" />
    <path d="M1113 523v18M1151 523v18M1190 523v18" stroke="#c05860" strokeWidth="1.500" opacity=".7" />
    {keys.map((k, i) => {
      const x = kx[i % 4];
      const y = ky[Math.floor(i / 4)];
      const op = i % 4 === 3;
      const fill = op ? "#067f72" : k === "=" ? "#0f8bc9" : k === "ON" ? "#79ab79" : "#dddccd";
      return (
        <g key={i}>
          <rect x={x} y={y} width="29.500" height="29.500" fill={fill} stroke="#2f2f2b" strokeWidth="1.200" />
          {k === "ON" ? (
            <g fill="#c9eec4" fontSize="9.500"><text x={x + 3} y={y + 11}>ON/</text><text x={x + 18} y={y + 26} fontSize="11">C</text></g>
          ) : op || k === "=" ? (
            <path
              d={k === "−" ? `M${x + 8} ${y + 14.500}h14` : k === "×" ? `M${x + 9} ${y + 8.500}l12 12M${x + 21} ${y + 8.500}l-12 12` : k === "+" ? `M${x + 7} ${y + 14.500}h14M${x + 14} ${y + 7.500}v14` : `M${x + 8.500} ${y + 12}h11M${x + 8.500} ${y + 17}h11`}
              stroke="#d9f5f0" strokeWidth="2.200"
            />
          ) : (
            <text x={x + 13} y={y + 21} textAnchor="middle" fontSize="18" fill="#8b8b80" stroke="#8b8b80" strokeWidth=".7">{k}</text>
          )}
        </g>
      );
    })}
    <g fontSize="7" fontWeight="bold" fill="#1c1c18" textAnchor="middle">
      <text x="1090.500" y="380">A</text><text x="1090.500" y="418.500">B</text><text x="1090.500" y="457.500">C</text><text x="1090.500" y="495.500">D</text>
      {["1", "2", "3", "4"].map((n, i) => <text key={n} transform={`translate(${[1115, 1153.5, 1192.5, 1231][i]} 514) rotate(-90)`}>{n}</text>)}
    </g>
  </svg>
);

const StatusBar = () => (
  <div className="flex h-[32px] shrink-0 items-center bg-[#f0f0f0] pt-[2px] font-['Liberation_Sans'] text-[12px] text-black">
    <div className="ml-[2px] h-6 w-[2px] border-r border-[#aaa]" />
    <div className="ml-[7px] flex h-5 w-[175px] border border-[#444] bg-[#ececec]">
      {["M8 4l10 8-10 8z", "M8 4l10 8-10 8z", "M6 4h4v16H6zM14 4h4v16h-4z", "M5 5h14v14H5z"].map((d, i) => (
        <div key={i} className="flex flex-1 items-center justify-center border-r border-b-2 border-[#555] border-b-[#999]">
          <Svg w={15} h={14}><path d={d} fill={i === 1 ? "none" : "#111"} stroke={i === 1 ? "#333" : "none"} strokeWidth="1.500" /></Svg>
        </div>
      ))}
    </div>
    <div className="ml-[6px] flex h-5 w-[109px] items-center border-t border-l border-[#b5b5b5]">
      <div className="ml-1 flex size-[15px] items-center justify-center rounded-full bg-[#17871c] font-['Liberation_Serif'] text-[12px] font-bold text-white">i</div>
      <span className="ml-[7px] tracking-[-0.120px] whitespace-nowrap">12 Message(s)</span>
    </div>
    <div className="ml-[8px] h-[30px] w-[5px] border-x border-[#b5b5b5]" />
    <div className="ml-[5px] flex h-[18px] w-[949px] items-center border-t border-l border-[#a0a0a0] pl-0.5 tracking-[-0.120px]">Run the simulation</div>
    <div className="ml-[6px] h-[30px] w-[7px] border-x border-[#b5b5b5]" />
    <div className="ml-[6px] h-[18px] w-[134px] border-t border-l border-[#a0a0a0]" />
  </div>
);

const glass = "flex h-[42px] shrink-0 items-center justify-center rounded-[3px] border border-[#b9dcf2]/80 bg-gradient-to-br from-white/55 to-white/20";

const RemoteTaskbar = () => (
  <div className="flex h-[44px] shrink-0 items-center overflow-hidden border-t border-[#7fb2d6] bg-[linear-gradient(90deg,#1b5480_0px,#1c5f93_80px,#2d8bc4_100px,#338fc9_350px,#2585c3_700px,#2f78bd_950px,#1f62ac_1100px,#174f93_1160px,#133d74_1250px,#143a6c_1431px)] pb-px">
    <div className="ml-[10px] flex size-[41px] shrink-0 items-center justify-center rounded-full border border-[#6aa3c9] bg-[radial-gradient(circle_at_50%_85%,#39a7d9,#1c4f82_55%,#8fb0c8)]">
      <Svg s={26}><path d="M3 5q4-3 8 0l-1 7q-4-3-8 0z" fill="#e8602b" /><path d="M13 6q4 3 8 0l-1 7q-4 3-8 0z" fill="#7dbb3a" /><path d="M2 13q4-3 8 0l-1 7q-4-3-8 0z" fill="#3f8fe0" /><path d="M11.500 14q4 3 8 0l-1 7q-4 3-8 0z" fill="#f6c62e" /></Svg>
    </div>
    <div className="ml-[14px] h-8 w-[9px] shrink-0 bg-[repeating-linear-gradient(0deg,#123e63_0_1.500px,transparent_1.500px_4px)] opacity-60" />
    <div className={glass + " ml-[11px] w-[65px]"}>
      <Svg w={36} h={32}><path d="M1 3h8l1 2h12v17H1z" fill="#e3c25c" /><path d="M2 7h20v14H2z" fill="#f8e596" /><path d="M5 12h14v11h-3v-6H8v6H5z" fill="#84c1e8" /><path d="M4 2h3v3H4z" fill="#2e9a42" /><path d="M10 4h9v3h-9z" fill="#e9f0f6" /></Svg>
    </div>
    <div className="ml-[20px] shrink-0">
      <Svg s={34}><path d="M19 14H8q1 5 5 5 3 0 4-2h4q-3 6-9 6-9-1-9-10Q4 4 12 4q9 0 8.500 10zM8 11h8q-1-3-4-3t-4 3z" fill="#1c6fbf" /><path d="M22 4C17-2 1 10 2 22c3-9 12-17 20-18z" fill="#f2c435" /></Svg>
    </div>
    <div className={glass + " ml-[19px] w-[57px]"}><Acrobat w={32} h={30} r={0} /></div>
    <div className="h-[42px] w-[4px] shrink-0 rounded-r border-r border-[#b9dcf2]/80 bg-white/20" />
    <div className="ml-[26px] shrink-0"><Svg w={28} h={28}><path d="M1 3 20 1l3 2v19l-3 1-19-2z" fill="#bcd7ea" /><circle cx="10" cy="12" r="8" fill="#ee7a1c" /><path d="m7 7 8 5-8 5z" fill="#fff" /></Svg></div>
    <div className="ml-[39px] shrink-0"><Firefox s={36} /></div>
    <div className="ml-[37px] shrink-0"><Svg w={31} h={27}><path d="M0 0v24l15-12z" fill="#5a2fc0" /><path d="M24 0v24L9 12z" fill="#cdb5f2" /></Svg></div>
    <div className={glass + " ml-[20px] w-[66px]"}><Chrome s={35} /></div>
    <div className="ml-[24px] shrink-0"><Svg w={24} h={31}><rect x="1" y="0" width="22" height="24" rx="2" fill="#c8dcea" /><path d="M3 2h18v2H3z" fill="#efb04a" /><path d="M3 5h18v5H3z" fill="#eef6fb" /><path d="M4 13h16M4 16.500h16M4 20h16" stroke="#7590a8" strokeWidth="2" strokeDasharray="2.500 1.500" /></Svg></div>
    <div className="ml-[41px] flex size-[35px] shrink-0 items-center justify-center rounded-full bg-[#c63d1f] font-['Liberation_Sans'] text-[27px] font-bold text-white">P</div>
    <div className="ml-[32px] shrink-0"><Svg w={26} h={24}><path d="M12 2 5 12l7 10" stroke="#f07822" strokeWidth="3.500" /><path d="M16 5q4 7 0 14" stroke="#4e7ea8" strokeWidth="3" /></Svg></div>
    <div className={glass + " ml-[28px] w-[57px] from-white/80 to-white/50"}><Isis w={36} h={28} /></div>
    <div className="h-[42px] w-[4px] shrink-0 rounded-r border-r border-[#b9dcf2]/80 bg-white/20" />
    <div className={glass + " ml-[7px] w-[66px]"}><CvAvr s={36} /></div>
    <div className={glass + " ml-[4px] w-[66px]"}><Connect w={32} h={30} /></div>
    <div className="ml-[38px] h-11 w-[56px] shrink-0 overflow-hidden"><Svg w={56} h={44}><path d="M0 0h5q10 9 18 24h-4Q10 9 0 0z" fill="#a9cdf0" opacity=".75" /></Svg></div>
    <div className="ml-[104px] h-8 w-[9px] shrink-0 bg-[repeating-linear-gradient(0deg,#0c2a4d_0_1.500px,transparent_1.500px_4px)] opacity-60" />
    <div className="ml-[10px] flex items-center font-['Open_Sans'] text-white">
      <span className="w-[17px] pb-2 text-[12px]">EN</span>
      <div className="ml-[18px] border-x-4 border-b-[5px] border-x-transparent border-b-white" />
      <div className="ml-[14px]"><Svg w={17} h={18}><path d="M8 8h10v7q-5 4-10 0zM10 2v6M16 2v6M13 17v6" fill="#eee" stroke="#eee" strokeWidth="2" /><path d="m1 11 9 12M10 11 1 23" stroke="#e81818" strokeWidth="4" /></Svg></div>
      <div className="ml-[11px] flex h-[13px] items-end gap-px">
        <div className="h-[3px] w-[2px] bg-white" /><div className="h-[5px] w-[2px] bg-white" /><div className="h-[8px] w-[3px] bg-white" /><div className="h-[10px] w-[2px] bg-white" /><div className="h-[13px] w-[3px] bg-white" />
      </div>
      <div className="ml-[11px]"><Svg w={16} h={14}><path d="M1 8h4l6-6v20l-6-6H1z" fill="#fff" /><path d="M14 8q3 4 0 8M18 4q6 8 0 16" stroke="#ddd" strokeWidth="1.800" /></Svg></div>
      <div className="ml-[18px] flex w-[60px] flex-col items-center text-[12px] leading-[18px] tracking-[-0.200px] whitespace-nowrap">
        <span className="flex gap-1">04:44 <bdi dir="rtl" className="font-['DejaVu_Sans'] text-[10px]">ب.ظ</bdi></span>
        <span>5/20/2021</span>
      </div>
    </div>
    <div className="ml-auto h-[42px] w-[14px] shrink-0 border border-[#6f93b8] bg-gradient-to-b from-[#5d7fa5] to-[#1d4471]" />
  </div>
);

const IsisWindow = () => (
  <div className="ml-px flex w-[1431px] flex-col overflow-hidden bg-[#f0f0ef]">
    <div className="flex h-[25px] shrink-0 items-center border-b-2 border-[#5e7fa8] bg-[linear-gradient(90deg,#8b9aad_0px,#8e9fb3_150px,#8fabc5_215px,#1f5080_235px,#2a5e95_280px,#5c8fbd_296px,#17487e_320px,#1a4c83_540px,#285c90_640px,#2b5a90_760px,#1c4b80_850px,#275588_960px,#184377_1040px,#1b4a80_1200px,#3b79a8_1431px)]">
      <Isis w={18} h={13} />
      <span className="ml-[5px] font-['Open_Sans'] text-[12.800px] text-[#1a2430]">UNTITLED - ISIS Professional</span>
      <div className="mr-[6px] ml-auto flex h-[19px] self-start overflow-hidden rounded-b border border-t-0 border-[#b8cde0]">
        <div className="flex w-[29px] items-end justify-center border-r border-[#b8cde0] bg-gradient-to-b from-[#7f9fc0] to-[#3d6a98] pb-[5px]"><div className="h-[3px] w-3 bg-white" /></div>
        <div className="flex w-[27px] items-center justify-center border-r border-[#b8cde0] bg-gradient-to-b from-[#7f9fc0] to-[#3d6a98]"><div className="h-[9px] w-3 border-2 border-white" /></div>
        <div className="flex w-[53px] items-center justify-center bg-gradient-to-b from-[#d58c80] to-[#b3361f]"><Svg w={11} h={9}><path d="m2 2 20 20M22 2 2 22" stroke="#fff" strokeWidth="5" /></Svg></div>
      </div>
    </div>
    <div className="flex h-[23px] shrink-0 items-center bg-gradient-to-b from-[#fbfcfe] via-[#dfe5f2] to-[#d5dcee] pb-[2px] pl-[8px] font-['Open_Sans'] text-[12.300px] text-[#1c1c24]">
      {menus.map(([m, w]) => <span key={m} className="shrink-0 tracking-[-0.100px] whitespace-nowrap" style={{ width: w }}>{m}</span>)}
    </div>
    <ToolRow />
    <div className="flex h-[736px] shrink-0">
      <SideTools />
      <div className="flex w-[140px] shrink-0 flex-col pl-px">
        <Overview />
        <div className="mt-[5px] flex h-[20px] w-[135px] items-stretch bg-[#b7c6d8] font-['Liberation_Sans'] text-[12px]">
          <div className="flex w-[18px] items-center justify-center border-r-2 border-b-2 border-l border-[#777] bg-[#eee] text-black">P</div>
          <div className="flex w-[20px] items-center justify-center border-r-2 border-b-2 border-[#777] bg-[#eee] text-black">L</div>
          <div className="flex flex-1 items-center justify-center tracking-[-0.200px] text-[#5a6673]">DEVICES</div>
        </div>
        <div className="flex h-[598px] w-[135px] flex-col border border-[#77777f] bg-[#fdfdfd] font-['Liberation_Sans'] text-[12.500px] leading-[14.500px] text-[#151515]">
          <span className="pl-px">ATMEGA16</span>
          <span className="bg-[#2f8be2] pl-px tracking-[-0.350px] text-[#d5ecff]">KEYPAD-SMALLCALC</span>
          <span className="pl-px">LM016L</span>
        </div>
      </div>
      <Schematic />
    </div>
    <StatusBar />
    <RemoteTaskbar />
  </div>
);

/* remote presenter's pointer */
const Pointer = () => (
  <div className="pointer-events-none absolute top-[992px] left-[77px]">
    <Svg w={32} h={34} vb="0 0 32 34">
      <path d="M1 1v16l4-4 3 7 3-1.500-3-7h5z" fill="#fff" stroke="#111" />
      <rect x="13.500" y="16.500" width="13" height="11" fill="#a7c5d8" stroke="#eee" />
      <circle cx="25" cy="23" r="3.500" fill="#f0dfb8" stroke="#a58a50" />
      <path d="M19 32q0-6 6-6t6 6z" fill="#e6c071" stroke="#a58a50" />
    </Svg>
  </div>
);

/* ---------- pods ---------- */

const SharePod = () => (
  <div className="flex w-[1432px] shrink-0 flex-col overflow-hidden border-t border-[#f4f4f4] bg-black">
    <div className={podHead + " h-[38px] border-b border-[#8c8c8c] pb-px"}>
      <span className="ml-[8px] w-[44px] text-[15px] font-semibold tracking-[0.400px]">Share</span>
      <span className="ml-[10px] flex items-center pb-[3px] text-[11px]"><span>-&nbsp;</span><bdi dir="rtl" className="font-['DejaVu_Sans'] text-[9.600px]">زهرا نسيم</bdi></span>
      <div className="ml-auto flex items-center pt-px">
        <div className="flex h-[27px] w-[144px] items-center justify-center rounded-[3px] border border-[#a9a9a9] bg-[#dedede] text-[15px] tracking-[0.100px] text-[#9c9c9c]">Request Control</div>
        <div className="ml-[12px] h-6 w-px bg-[#999]" />
        <div className="ml-[13px] flex h-[29px] w-[62px] overflow-hidden rounded-[2px] border border-[#999]">
          <div className="flex flex-1 items-center justify-center bg-[#bdbdbd]"><Svg w={24} h={20}><path d="M0 0h18v16H0z" fill="#999" stroke="#777" /><path d="M22 1v16M0 21h17M18 17l5 5" stroke="#888" strokeWidth="2" strokeDasharray="3 1.500" /></Svg></div>
          <div className="flex flex-1 items-center justify-center bg-[#e6e6e6]"><Svg w={24} h={20}><path d="M0 0h18v18H0zM20 0h3v18h-3zM0 20h18v3H0z" fill="#aaa" /></Svg></div>
        </div>
        <div className="w-[13px]" />
        <Expand />
        <div className="ml-[13px] h-6 w-px bg-[#888]" />
        <div className="w-[29px]" />
        <PodMenu faint />
        <div className="w-[17px]" />
      </div>
    </div>
    <div className="h-[13px] shrink-0 bg-black" />
    <IsisWindow />
  </div>
);

const VideoPod = () => (
  <div className="flex h-[298px] shrink-0 flex-col border border-[#111] border-t-[#f4f4f4]">
    <div className={podHead + " h-[38px] border-b border-[#777] pb-px"}>
      <span className="ml-[7px] text-[15px] font-medium tracking-[0.300px]">Video</span>
      <div className="mr-[17px] ml-auto flex items-center pt-px"><Expand /><div className="mr-[29px] ml-[13px] h-6 w-px bg-[#888]" /><PodMenu faint /></div>
    </div>
    <div className="flex-1 bg-[repeating-linear-gradient(135deg,#959595_0_1px,#868686_1.500px_5.500px,#8d8d8d_6px)]" />
  </div>
);

const Head = ({ dev, host }: { dev?: boolean; host?: boolean }) => (
  <div className={"w-[21px] shrink-0 " + (dev || host ? "" : "pl-[2px]")}>
    <Svg w={dev ? 20 : host ? 19 : 16} h={19} vb={dev ? "0 0 30 24" : "0 0 24 24"}>
      <path d="M2 22q-1-8 5-9h10q6 1 5 9z" fill="#e9b64c" stroke="#8a6a2b" strokeWidth="1.500" />
      <rect x="5" y="2" width="14" height="14" rx="6" fill="#e9dcc3" stroke="#7f6c4b" strokeWidth="1.800" />
      {host && <path d="M12 9h5v5h-1l2 5-2 3h-3l-1-3 1-5h-1z" fill="#4a4334" />}
      {dev && <g><rect x="18" y="6" width="11" height="17" fill="#dfe6ea" stroke="#666" strokeWidth="1.500" /><rect x="21" y="10" width="5" height="7" fill="#8db7d4" stroke="#567" /></g>}
    </Svg>
  </div>
);

const Mic = ({ off }: { off?: boolean }) => (
  <Svg w={off ? 16 : 21} h={20} vb={off ? "0 0 18 24" : "0 0 26 24"}>
    <path d="M2 9v8h14V9M9 17v4M3 22h12" stroke="#5c86a8" strokeWidth="2.500" />
    <rect x="5" y="1" width="8" height="13" rx="3" fill="#6e757c" stroke="#444" />
    {off ? <path d="M1 20 17 2" stroke="#f01010" strokeWidth="3" /> : <path d="M18 4q3 4 0 8M21 2q5 6 0 12" stroke="#666" strokeWidth="1.500" />}
  </Svg>
);

const ScreenShare = () => (
  <Svg w={21} h={19} vb="0 0 26 24">
    <rect x="1" y="1" width="20" height="15" fill="#e9eef0" stroke="#555" strokeWidth="1.500" />
    <rect x="4" y="4" width="14" height="9" fill="#9fc2d8" stroke="#667" />
    <path d="M4 19h14v2H4z" fill="#999" />
    <path d="m8 11 6-5v3h5v4h-5v3z" fill="#4ab52f" stroke="#1f6a18" />
    <path d="m25 18-6 5v-3h-4v-5h4v-3z" fill="#f5cf62" stroke="#9a7420" />
  </Svg>
);

const GroupRow = ({ label, open, h, line = "border-[#8e8e8e]" }: { label: string; open: boolean; h: string; line?: string }) => (
  <div className={"flex shrink-0 items-center border-b bg-gradient-to-b from-white to-[#dedede] " + h + " " + line}>
    <div className="ml-[8px] w-5">
      {open ? <div className="w-0 border-x-[4.500px] border-t-[5px] border-x-transparent border-t-[#444]" /> : <div className="w-0 border-y-[4.500px] border-l-[6px] border-y-transparent border-l-[#8a8a8a]" />}
    </div>
    <span className={"text-[13px] font-medium tracking-[0.400px] " + (open ? "text-[#383838]" : "text-[#8b8b8b]")}>{label}</span>
  </div>
);

const people: { n: string; dev?: boolean; media?: boolean; me?: boolean; bold?: boolean }[] = [
  { n: "بهناز نظريان عالمي", dev: true },
  { n: "زهرا افشارصفوي", media: true },
  { n: "زهرا رستمي زمان", me: true },
  { n: "ساجده سعادتي رستگار" },
  { n: "سارا گلستاني", dev: true },
  { n: "سحر واحدي جو", media: true, bold: true },
];

const rtlName = "pb-0.5 font-['DejaVu_Sans'] text-[9.600px] [-webkit-text-stroke:0.300px_currentColor] ";

const AttendeesPod = () => (
  <div className="mt-[7px] flex h-[390px] shrink-0 flex-col overflow-hidden border border-[#111] border-t-[#f4f4f4] bg-[#e0e0e0] font-['Noto_Sans']">
    <div className={podHead + " h-[37px] border-b border-[#6e6e6e]"}>
      <span className="ml-[7px] text-[15px] font-semibold tracking-[0.200px]">Attendees</span>
      <span className="ml-[12px] text-[12px] tracking-[0.300px]">(13)</span>
      <div className="mr-[17px] ml-auto"><PodMenu /></div>
    </div>
    <div className="flex h-[40px] shrink-0 items-center border-b border-[#6e6e6e] bg-[#e1e1e1] pl-[9px]">
      <div className="flex h-[30px] w-[63px] overflow-hidden rounded-[3px] border border-[#777]">
        <div className="flex w-[31px] items-center justify-center bg-[#8d8d8d]"><Svg w={21} h={20}><path d="M0 2h24M0 8h3M5 8h19M0 13h3M5 13h19M0 18h3M5 18h19M0 22.500h3M5 22.500h19" stroke="#505050" strokeWidth="2" /></Svg></div>
        <div className="flex flex-1 items-center justify-center bg-[#f2f2f2]"><Svg w={21} h={18}><path d="M5 1h4v5l4 4v6H0v-6l4-4z" fill="#4c4c4c" /><path d="M14 8h10M14 13h10M14 18h10M14 22.500h10" stroke="#4c4c4c" strokeWidth="2.200" /></Svg></div>
      </div>
    </div>
    <div className="flex h-[27px] shrink-0 items-center border-b border-[#8e8e8e] pl-[11px]">
      <Svg w={18} h={19}><path d="M2 3q4-4 6 0l1 5-3 3q1 5 5 7l3-2 5 3q-1 5-6 4Q0 18 2 3z" fill="#a5cbe6" stroke="#47708f" strokeWidth="1.500" /><path d="M12 10q7 0 8 8M12 14q4 0 4 4" stroke="#666" strokeWidth="1.500" /></Svg>
      <bdi dir="rtl" className={rtlName + "ml-[8px] text-black"}>زهرا نسيم</bdi>
    </div>
    <div className="flex min-h-0 flex-1">
      <div className="flex flex-1 flex-col overflow-hidden bg-white">
        <GroupRow label="Hosts (1)" open h="h-[28px]" />
        <div className="flex h-[28px] shrink-0 items-center border-b border-[#8e8e8e] pr-[8px] pl-[12px]">
          <Head host />
          <bdi dir="rtl" className={rtlName + "ml-[11px] text-black"}>زهرا نسيم</bdi>
          <div className="ml-auto"><Mic /></div>
        </div>
        <GroupRow label="Presenters (0)" open={false} h="h-[28px]" />
        <GroupRow label="Participants (12)" open h="h-[27px]" line="border-[#666]" />
        {people.map((p, i) => (
          <div key={p.n} className={"flex h-[27.600px] shrink-0 items-center border-b border-[#e0e0e0] pr-[8px] pl-[12px] " + (i % 2 ? "bg-[#f6f6f6]" : "bg-white")}>
            <Head dev={p.dev} />
            <bdi dir="rtl" className={rtlName + "ml-[11px] " + (p.me ? "text-[#1473e6]" : "text-black") + (p.bold ? " font-bold italic" : "")}>{p.n}</bdi>
            {p.media && <div className="ml-auto flex items-center gap-[17px]"><Mic off /><ScreenShare /></div>}
          </div>
        ))}
        <div className="pl-[12px]"><Head /></div>
      </div>
      <div className="flex w-[18px] shrink-0 flex-col border-l border-[#777] bg-[#c6c6c6]">
        <div className="flex h-[176px] items-center justify-center border border-[#888] bg-gradient-to-r from-white to-[#e4e4e4]"><div className="h-[7px] w-[5px] bg-[repeating-linear-gradient(0deg,#333_0_1px,transparent_1px_2.500px)]" /></div>
      </div>
    </div>
  </div>
);

const chat: [string, string][] = [
  ["زهرا افشارصفوي", "+"],
  ["سارا گلستاني", "ble"],
  ["ساجده سعادتي رستگار", "bale"],
  ["زهرا طوطيان طرقبه", "+"],
];

const ChatPod = () => (
  <div className="mt-[5px] flex h-[259px] shrink-0 flex-col overflow-hidden border border-[#111] border-t-[#f4f4f4] bg-[#e0e0e0] font-['Noto_Sans']">
    <div className={podHead + " h-[38px] border-b border-[#6e6e6e]"}>
      <span className="ml-[7px] text-[15px] font-semibold tracking-[0.800px]">Chat</span>
      <span className="ml-[11px] text-[12px] tracking-[0.200px]">(Everyone)</span>
      <div className="mr-[17px] ml-auto"><PodMenu /></div>
    </div>
    <div className="flex h-[150px] shrink-0 border-b border-[#888]">
      <div className="flex flex-1 flex-col bg-[#efefef] pt-[14px] pl-[8px] text-black">
        {chat.map(([n, m]) => (
          <div key={n} className="flex h-[28px] items-center whitespace-pre">
            <bdi dir="rtl" className="font-['DejaVu_Sans'] text-[11.200px] [-webkit-text-stroke:0.300px_currentColor]">{n}</bdi>
            <span className="font-['Liberation_Sans'] text-[14px]"><b>:</b> {m}</span>
          </div>
        ))}
      </div>
      <div className="flex w-[18px] flex-col border-l border-[#777] bg-[#c6c6c6]">
        <div className="mt-auto flex h-[12px] items-center justify-center border border-[#888] bg-white"><div className="h-[6px] w-[5px] bg-[repeating-linear-gradient(0deg,#333_0_1px,transparent_1px_2.500px)]" /></div>
      </div>
    </div>
    <div className="flex h-[40px] shrink-0 items-center border-b border-[#888] bg-[#dedede] pl-[10px]">
      <div className="flex h-[28px] w-[407px] items-center rounded-[2px] border-2 border-[#5be01e] bg-white pl-[2px] outline-1 outline-[#7c9a6c]"><div className="h-[19px] w-px bg-black" /></div>
      <div className="ml-[5px] flex h-[28px] w-[38px] items-center justify-center rounded-[3px] border border-[#8a8a8a] bg-[#ededed]"><Svg w={21} h={17}><path d="M12 2c15 0 15 15 1 15-2 2-5 4-9 4 2-1 3-3 2-5C-3 13 0 2 12 2z" fill="#9a9a9a" stroke="#555" strokeWidth="1.500" /></Svg></div>
    </div>
    <div className="flex flex-1 bg-[repeating-linear-gradient(135deg,#e2e2e2_0_1.200px,#cfcfcf_1.800px_6px)]">
      <div className="flex w-[77px] items-center border-r border-[#777] bg-[#ececec] pl-[8px] text-[12px] font-semibold tracking-[0.200px] text-[#222]">Everyone</div>
    </div>
  </div>
);

export default function App() {
  return (
    <div className="relative flex h-[1080px] w-[1920px] flex-col overflow-hidden bg-[#1d2127]">
      <HostTaskbar />
      <div className="flex h-[1047px] flex-col border-[4px] border-t-[5px] border-[#fc2f2f] bg-[#404040] pl-px">
        <div className="h-px shrink-0 bg-[#2d3a36]" />
        <TitleBar />
        <ConnectBar />
        <div className="flex h-[966px] shrink-0 pt-[6px]">
          <SharePod />
          <div className="ml-[6px] flex w-[471px] flex-col">
            <VideoPod />
            <AttendeesPod />
            <ChatPod />
          </div>
        </div>
      </div>
      <Pointer />
    </div>
  );
}
